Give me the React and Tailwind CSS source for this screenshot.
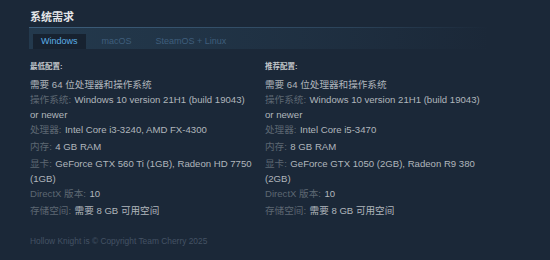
import React from "react";

const FONT = { fontFamily: '"Liberation Sans", "Noto Sans CJK SC", Arial, sans-serif' };

function Row({ label, value, mt = "" }) {
  return (
    <div className={`leading-[15px] ${mt}`}>
      {label && <span className="text-[#5d6772] mr-[3.5px]">{label}:</span>}
      <span className="text-[#b0b6bc]">{value}</span>
    </div>
  );
}

function Col({ title, cpu, ram, gpu }) {
  return (
    <div className="flex flex-col text-[9.6px]">
      <div className="text-[7.5px] leading-[12px] font-bold text-[#c3c7cb]">{title}:</div>
      <div className="mt-[3.5px]">
        <Row value="需要 64 位处理器和操作系统" />
        <Row label="操作系统" value="Windows 10 version 21H1 (build 19043) or newer" />
        <Row label="处理器" value={cpu} />
        <Row label="内存" value={ram} mt="mt-[2px]" />
        <Row label="显卡" value={gpu} mt="mt-[2px]" />
        <Row label="DirectX 版本" value="10" />
        <Row label="存储空间" value="需要 8 GB 可用空间" mt="mt-[2px]" />
      </div>
    </div>
  );
}

export default function App() {
  return (
    <div className="w-[550px] h-[260px] bg-[#1b2838] overflow-hidden" style={FONT}>
      <div className="px-[29px] pt-[10px]">
        <div className="pl-px text-[11px] leading-[15px] font-bold text-[#e4e6e8]">系统需求</div>
        <div className="mt-[2px] w-[460px] bg-[linear-gradient(90deg,rgba(42,71,94,0.55)_0%,rgba(42,71,94,0.25)_60%,rgba(42,71,94,0)_100%)]">
          <div className="h-px bg-[linear-gradient(90deg,rgba(64,98,128,0.9)_0%,rgba(64,98,128,0.4)_70%,rgba(64,98,128,0)_100%)]" />
          <div className="flex items-end gap-[8px] pl-[4px] pt-[6px] text-[9px]">
            <div className="h-[15px] leading-[15px] px-[8px] bg-[#172230] text-[#5caee6]">Windows</div>
            <div className="h-[15px] leading-[15px] px-[8px] text-[#3f5e7c]">macOS</div>
            <div className="h-[15px] leading-[15px] px-[8px] text-[#3f5e7c]">SteamOS + Linux</div>
          </div>
        </div>
        <div className="mt-[12px] pl-px grid grid-cols-[224px_224px] gap-x-[11px]">
          <Col title="最低配置" cpu="Intel Core i3-3240, AMD FX-4300" ram="4 GB RAM" gpu="GeForce GTX 560 Ti (1GB), Radeon HD 7750 (1GB)" />
          <Col title="推荐配置" cpu="Intel Core i5-3470" ram="8 GB RAM" gpu="GeForce GTX 1050 (2GB), Radeon R9 380 (2GB)" />
        </div>
        <div className="mt-[17.5px] pl-px text-[8.4px] leading-[12px] text-[#445264]">
          Hollow Knight is © Copyright Team Cherry 2025
        </div>
      </div>
    </div>
  );
}
